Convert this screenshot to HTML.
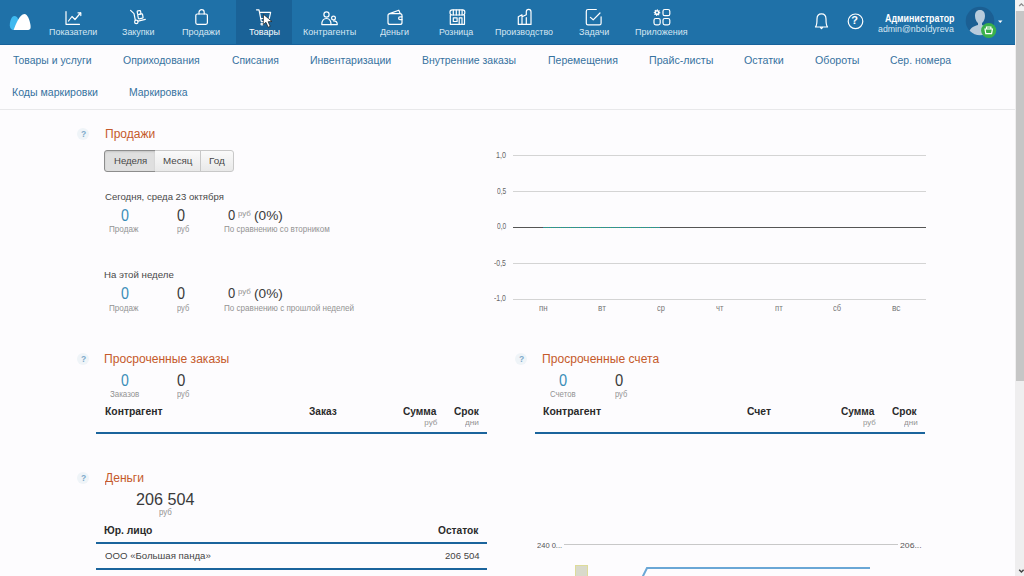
<!DOCTYPE html>
<html><head><meta charset="utf-8">
<style>
html,body{margin:0;padding:0;width:1024px;height:576px;overflow:hidden;background:#fdfcfe;font-family:"Liberation Sans",sans-serif;}
.t{position:absolute;white-space:nowrap;transform-origin:0 0;}
.a{position:absolute;}
#hdr{position:absolute;left:0;top:0;width:1015px;height:44px;background:#1f71a8;border-bottom:1px solid #17629b;}
#act{position:absolute;left:236px;top:0;width:56px;height:44px;background:#1a6297;}
#sb{position:absolute;left:1015px;top:0;width:9px;height:576px;background:#efeeef;}
#thumb{position:absolute;left:1016px;top:11px;width:8px;height:370px;background:#c6c6c6;}
#sbtop{position:absolute;left:1015px;top:0;width:9px;height:11px;background:#f3f3f3;}
.hl{position:absolute;height:2px;background:#1b649c;}
.gl{position:absolute;height:1px;background:#d4d4d4;}
.q{position:absolute;width:12px;height:12px;border-radius:50%;background:#eff4f8;}
.q:after{content:"?";position:absolute;left:0.5px;top:2px;width:12px;text-align:center;font-size:8.5px;line-height:9px;font-weight:700;color:#7eaacb;font-family:"Liberation Sans",sans-serif;}
.btn{position:absolute;top:150px;height:20px;border:1px solid #c8c8c8;background:linear-gradient(#fafafa,#e9e9e9);}
</style></head><body>
<div id="hdr"></div>
<div id="act"></div>

<!-- logo -->
<svg class="a" style="left:8px;top:12px" width="26" height="22" viewBox="0 0 26 22">
  <path d="M6.4 4 C3.6 4 1.8 9 1.8 13.2 C1.8 16.3 3.4 17.9 5.6 17.9 L8 17.9 C9.5 14 10.6 10 10.3 8 C9.8 5.5 8.4 4 6.4 4Z" fill="#3fb9ef"/>
  <path d="M5.6 17.9 C8.2 12 11.5 2.1 16.4 2.1 C19.6 2.1 21.6 8 22.5 13 C23 16.3 22.3 17.9 20.3 17.9 Z" fill="#ffffff"/>
</svg>
<!-- nav icons -->
<svg class="a" style="left:0;top:0" width="1015" height="45" fill="none" stroke="#ffffff" stroke-width="1.2" stroke-linecap="round" stroke-linejoin="round">
  <!-- Показатели -->
  <path d="M66 11.5 V24.3 H79.5"/><path d="M68.5 21 L72 16.5 L75 19.5 L80.5 13"/><path d="M78 12.8 H80.8 V15.6"/>
  <!-- Закупки -->
  <path d="M130.6 10.4 L134 13.6 L135.3 20.1"/><circle cx="136.3" cy="21.9" r="1.7"/><path d="M138.1 21.2 L145.3 19.3"/>
  <g transform="rotate(-10 140 15)"><rect x="137.8" y="10.6" width="3.4" height="3.6" rx="0.7"/><rect x="137.8" y="14.2" width="4.8" height="4.4" rx="0.7"/></g>
  <!-- Продажи -->
  <rect x="195.8" y="14" width="11.6" height="10.3" rx="1.5"/><path d="M199 14 V12.3 A2.6 2.6 0 0 1 204.2 12.3 V14"/>
  <!-- Товары (cart) -->
  <path d="M256.5 9.8 H259 L261.3 21.5 H268.5"/><path d="M259.7 12.3 H270.6 L269.3 18.5 H261"/><circle cx="262" cy="24" r="1"/>
  <!-- Контрагенты -->
  <circle cx="326.5" cy="14.5" r="2.6"/><path d="M321.8 24.6 C321.8 20.5 323.8 18.5 326.5 18.5 C329.2 18.5 331 20.5 331 24.6 Z"/>
  <circle cx="333.5" cy="18" r="1.9"/><path d="M331 24.6 H337.3 C337.3 22.2 336 20.9 333.5 20.9"/>
  <!-- Деньги -->
  <rect x="388" y="13.6" width="14" height="10.8" rx="2"/><path d="M389.5 13.6 L398.8 10.2 L400.2 13.6"/><path d="M402 16.8 H400 A1.4 1.4 0 0 0 400 19.6 H402"/>
  <!-- Розница -->
  <path d="M450.3 15 V24.3 H464.5 V15"/><rect x="450" y="9.8" width="14.8" height="5.2" rx="2.2"/><path d="M453.3 10 V15 M456.3 10 V15 M459.3 10 V15 M462.1 10 V15"/>
  <rect x="453.3" y="17.8" width="3.8" height="3.7"/><path d="M459.2 24.3 V17.8 H462 V24.3"/>
  <!-- Производство -->
  <path d="M518.3 24.4 V16.8 L522 14.8 V16.8 L526.3 14.8 V11.8 A2.3 2.3 0 0 1 531 11.8 V24.4 Z"/><path d="M522 17.5 V24.4 M526.3 17.5 V24.4"/>
  <!-- Задачи -->
  <path d="M596.3 9.5 H588 A1.7 1.7 0 0 0 586.3 11.2 V23.2 A1.7 1.7 0 0 0 588 24.9 H599.4 A1.7 1.7 0 0 0 601.1 23.2 V16.8"/><path d="M590.4 17.4 L593.2 19.8 L600 13"/>
  <!-- Приложения -->
  <rect x="663" y="9.5" width="6.8" height="6.2" rx="1.8"/><rect x="654" y="18.5" width="6.2" height="6.3" rx="1.8"/><rect x="663" y="18.5" width="6.8" height="6.3" rx="1.8"/>
  <path d="M657.00 9.20 L657.66 9.27 L657.96 10.29 L658.39 10.52 L659.40 10.20 L659.83 10.71 L659.31 11.64 L659.45 12.11 L660.40 12.60 L660.33 13.26 L659.31 13.56 L659.08 13.99 L659.40 15.00 L658.89 15.43 L657.96 14.91 L657.49 15.05 L657.00 16.00 L656.34 15.93 L656.04 14.91 L655.61 14.68 L654.60 15.00 L654.17 14.49 L654.69 13.56 L654.55 13.09 L653.60 12.60 L653.67 11.94 L654.69 11.64 L654.92 11.21 L654.60 10.20 L655.11 9.77 L656.04 10.29 L656.51 10.15 Z" fill="#ffffff" stroke="none"/><circle cx="657" cy="12.6" r="1" fill="#1f71a8" stroke="none"/>
  <!-- bell -->
  <path d="M815.5 27 C817 25.5 817 23 817 19 C817 15.5 819 13.8 821.5 13.8 C824 13.8 826 15.5 826 19 C826 23 826 25.5 827.5 27 Z"/><path d="M820.5 27.5 L821.5 28.5 L822.5 27.5"/>
  <!-- help -->
  <circle cx="855.5" cy="21.3" r="7.3"/>
</svg>
<div class="t" style="left:851.3px;top:14.8px;font-size:11px;line-height:11px;font-weight:700;color:#fff">?</div>

<!-- avatar -->
<svg class="a" style="left:964px;top:5px" width="40" height="36" viewBox="0 0 40 36">
  <defs><clipPath id="cc"><circle cx="16" cy="16" r="14.3"/></clipPath></defs>
  <circle cx="16" cy="16" r="14.3" fill="#1b5f93"/>
  <g clip-path="url(#cc)" fill="#b8cbdc">
    <path d="M16 5 C12.5 5 11 7.5 11 11 C11 14 12.5 17 14 18 L14 20 C9 21.5 5 23 4 31 L28 31 C27 23 23 21.5 18 20 L18 18 C19.5 17 21 14 21 11 C21 7.5 19.5 5 16 5Z"/>
  </g>
  <circle cx="24.7" cy="25.5" r="7.6" fill="#3ab04a"/>
  <path d="M21 24 H28.4 L27.6 28.6 H21.8 Z" fill="none" stroke="#fff" stroke-width="1.2"/>
  <path d="M22.5 24 V22 H26.9 V24" fill="none" stroke="#fff" stroke-width="1.2"/>
  <path d="M34 15.5 L38.5 15.5 L36.25 18 Z" fill="#fff"/>
</svg>

<!-- cursor -->
<svg class="a" style="left:262px;top:13px" width="14" height="16" viewBox="0 0 14 16">
  <path d="M1.50 1.40 L1.27 11.63 L3.92 9.33 L6.21 14.28 L8.17 13.36 L6.10 8.64 L10.01 8.53 Z" fill="#fff" stroke="#1a1a1a" stroke-width="0.7" stroke-linejoin="round"/>
</svg>

<div id="sb"></div><div id="sbtop"></div><div id="thumb"></div>
<svg class="a" style="left:1015px;top:0" width="9" height="576"><path d="M4.2 6 L6.4 3.8 L8.6 6" fill="none" stroke="#8a8a8a" stroke-width="1.3"/><path d="M4.2 569.8 L6.4 572 L8.6 569.8" fill="none" stroke="#444" stroke-width="1.4"/></svg>

<!-- submenu bottom border -->
<div class="a" style="left:0;top:109px;width:1015px;height:1px;background:#e8e8ea"></div>

<!-- help icons -->
<div class="q" style="left:77px;top:128px"></div>
<div class="q" style="left:77px;top:353px"></div>
<div class="q" style="left:515px;top:353px"></div>
<div class="q" style="left:77px;top:472px"></div>

<!-- period buttons -->
<div class="btn" style="left:104px;width:50px;border-radius:3px 0 0 3px;background:#dfdfdf;box-shadow:inset 0 1px 2px rgba(0,0,0,.12);border-color:#8d8d8d"></div>
<div class="btn" style="left:155px;width:45px;border-left:none;border-radius:0"></div>
<div class="btn" style="left:200px;width:32px;border-radius:0 3px 3px 0"></div>

<!-- chart 1 -->
<div class="gl" style="left:513px;top:155px;width:413px"></div>
<div class="gl" style="left:513px;top:191px;width:413px"></div>
<div class="a" style="left:513px;top:227px;width:413px;height:1px;background:#555"></div>
<div class="a" style="left:543px;top:227px;width:117px;height:1px;background:repeating-linear-gradient(90deg,#2f78b8 0 1px,#3fae5e 1px 2px)"></div>
<div class="gl" style="left:513px;top:263px;width:413px"></div>
<div class="gl" style="left:513px;top:299px;width:413px"></div>

<!-- table lines -->
<div class="hl" style="left:96px;top:432px;width:391px"></div>
<div class="hl" style="left:535px;top:432px;width:390px"></div>
<div class="hl" style="left:96px;top:541.5px;width:391px"></div>
<div class="hl" style="left:96px;top:567.5px;width:391px"></div>

<!-- chart 2 -->
<div class="gl" style="left:563.5px;top:544px;width:334px;background:#c8c8c8"></div>
<div class="a" style="left:575px;top:565px;width:11px;height:12px;background:#d9dacb;border:1px solid #dedc9a;border-bottom:none"></div>
<svg class="a" style="left:630px;top:560px" width="250" height="16"><path d="M12 18 L17 8 H240" fill="none" stroke="#6aa7d6" stroke-width="2"/></svg>

<div class=t style="left:48.86px;top:27.00px;font-size:9.5px;line-height:9.5px;font-weight:400;color:#d6e6f2;transform:scaleX(0.9440)">Показатели</div>
<div class=t style="left:122.00px;top:27.00px;font-size:9.5px;line-height:9.5px;font-weight:400;color:#d6e6f2;transform:scaleX(0.9382)">Закупки</div>
<div class=t style="left:181.64px;top:27.00px;font-size:9.5px;line-height:9.5px;font-weight:400;color:#d6e6f2;transform:scaleX(0.9579)">Продажи</div>
<div class=t style="left:249.10px;top:27.00px;font-size:9.5px;line-height:9.5px;font-weight:400;color:#ffffff;transform:scaleX(0.9469)">Товары</div>
<div class=t style="left:302.75px;top:27.00px;font-size:9.5px;line-height:9.5px;font-weight:400;color:#d6e6f2;transform:scaleX(0.9500)">Контрагенты</div>
<div class=t style="left:380.20px;top:27.00px;font-size:9.5px;line-height:9.5px;font-weight:400;color:#d6e6f2;transform:scaleX(0.9467)">Деньги</div>
<div class=t style="left:439.07px;top:27.00px;font-size:9.5px;line-height:9.5px;font-weight:400;color:#d6e6f2;transform:scaleX(0.9333)">Розница</div>
<div class=t style="left:494.56px;top:27.00px;font-size:9.5px;line-height:9.5px;font-weight:400;color:#d6e6f2;transform:scaleX(0.9361)">Производство</div>
<div class=t style="left:578.80px;top:27.00px;font-size:9.5px;line-height:9.5px;font-weight:400;color:#d6e6f2;transform:scaleX(0.9484)">Задачи</div>
<div class=t style="left:635.25px;top:27.00px;font-size:9.5px;line-height:9.5px;font-weight:400;color:#d6e6f2;transform:scaleX(0.9463)">Приложения</div>
<div class=t style="left:884.50px;top:14.00px;font-size:10px;line-height:10px;font-weight:700;color:#ffffff;transform:scaleX(0.8859)">Администратор</div>
<div class=t style="left:877.90px;top:24.00px;font-size:9.5px;line-height:9.5px;font-weight:400;color:#d6e6f2;transform:scaleX(0.9244)">admin@nboldyreva</div>
<div class=t style="left:13.20px;top:55.00px;font-size:11.5px;line-height:11.5px;font-weight:400;color:#36729f;transform:scaleX(0.9047)">Товары и услуги</div>
<div class=t style="left:123.00px;top:55.00px;font-size:11.5px;line-height:11.5px;font-weight:400;color:#36729f;transform:scaleX(0.9107)">Оприходования</div>
<div class=t style="left:231.60px;top:55.00px;font-size:11.5px;line-height:11.5px;font-weight:400;color:#36729f;transform:scaleX(0.8981)">Списания</div>
<div class=t style="left:310.29px;top:55.00px;font-size:11.5px;line-height:11.5px;font-weight:400;color:#36729f;transform:scaleX(0.9149)">Инвентаризации</div>
<div class=t style="left:422.09px;top:55.00px;font-size:11.5px;line-height:11.5px;font-weight:400;color:#36729f;transform:scaleX(0.9098)">Внутренние заказы</div>
<div class=t style="left:547.99px;top:55.00px;font-size:11.5px;line-height:11.5px;font-weight:400;color:#36729f;transform:scaleX(0.9133)">Перемещения</div>
<div class=t style="left:648.77px;top:55.00px;font-size:11.5px;line-height:11.5px;font-weight:400;color:#36729f;transform:scaleX(0.9265)">Прайс-листы</div>
<div class=t style="left:744.20px;top:55.00px;font-size:11.5px;line-height:11.5px;font-weight:400;color:#36729f;transform:scaleX(0.9310)">Остатки</div>
<div class=t style="left:814.80px;top:55.00px;font-size:11.5px;line-height:11.5px;font-weight:400;color:#36729f;transform:scaleX(0.9277)">Обороты</div>
<div class=t style="left:890.40px;top:55.00px;font-size:11.5px;line-height:11.5px;font-weight:400;color:#36729f;transform:scaleX(0.9075)">Сер. номера</div>
<div class=t style="left:11.78px;top:87.00px;font-size:11.5px;line-height:11.5px;font-weight:400;color:#36729f;transform:scaleX(0.9196)">Коды маркировки</div>
<div class=t style="left:128.59px;top:87.00px;font-size:11.5px;line-height:11.5px;font-weight:400;color:#36729f;transform:scaleX(0.9062)">Маркировка</div>
<div class=t style="left:104.74px;top:128.00px;font-size:12.5px;line-height:12.5px;font-weight:400;color:#c55a2b;transform:scaleX(0.9608)">Продажи</div>
<div class=t style="left:114.34px;top:157.00px;font-size:9px;line-height:9px;font-weight:400;color:#484848;transform:scaleX(1.0600)">Неделя</div>
<div class=t style="left:162.72px;top:157.00px;font-size:9px;line-height:9px;font-weight:400;color:#484848;transform:scaleX(1.0846)">Месяц</div>
<div class=t style="left:208.80px;top:157.00px;font-size:9px;line-height:9px;font-weight:400;color:#484848;transform:scaleX(1.1000)">Год</div>
<div class=t style="left:104.90px;top:193.00px;font-size:9px;line-height:9px;font-weight:400;color:#484848;transform:scaleX(1.0607)">Сегодня, среда 23 октября</div>
<div class=t style="left:103.72px;top:271.00px;font-size:9px;line-height:9px;font-weight:400;color:#484848;transform:scaleX(1.0750)">На этой неделе</div>
<div class=t style="left:120.50px;top:208.00px;font-size:16px;line-height:16px;font-weight:400;color:#3a8db8;transform:scaleX(0.8889)">0</div>
<div class=t style="left:109.24px;top:225.00px;font-size:8.5px;line-height:8.5px;font-weight:400;color:#939393;transform:scaleX(0.9567)">Продаж</div>
<div class=t style="left:176.80px;top:208.00px;font-size:16px;line-height:16px;font-weight:400;color:#3a3a3a;transform:scaleX(0.9000)">0</div>
<div class=t style="left:177.00px;top:225.00px;font-size:8.5px;line-height:8.5px;font-weight:400;color:#939393;transform:scaleX(0.8786)">руб</div>
<div class=t style="left:227.80px;top:208.00px;font-size:14px;line-height:14px;font-weight:400;color:#3a3a3a;transform:scaleX(0.9286)">0</div>
<div class=t style="left:238.10px;top:210.00px;font-size:8px;line-height:8px;font-weight:400;color:#939393;transform:scaleX(0.9846)">руб</div>
<div class=t style="left:253.99px;top:209.00px;font-size:13.5px;line-height:13.5px;font-weight:400;color:#3a3a3a;transform:scaleX(1.0111)">(0%)</div>
<div class=t style="left:223.75px;top:225.00px;font-size:8.5px;line-height:8.5px;font-weight:400;color:#939393;transform:scaleX(0.9450)">По сравнению со вторником</div>
<div class=t style="left:120.50px;top:286.00px;font-size:16px;line-height:16px;font-weight:400;color:#3a8db8;transform:scaleX(0.8889)">0</div>
<div class=t style="left:109.24px;top:304.00px;font-size:8.5px;line-height:8.5px;font-weight:400;color:#939393;transform:scaleX(0.9567)">Продаж</div>
<div class=t style="left:176.80px;top:286.00px;font-size:16px;line-height:16px;font-weight:400;color:#3a3a3a;transform:scaleX(0.9000)">0</div>
<div class=t style="left:177.00px;top:304.00px;font-size:8.5px;line-height:8.5px;font-weight:400;color:#939393;transform:scaleX(0.8786)">руб</div>
<div class=t style="left:227.80px;top:286.00px;font-size:14px;line-height:14px;font-weight:400;color:#3a3a3a;transform:scaleX(0.9286)">0</div>
<div class=t style="left:238.10px;top:288.00px;font-size:8px;line-height:8px;font-weight:400;color:#939393;transform:scaleX(0.9846)">руб</div>
<div class=t style="left:253.99px;top:287.00px;font-size:13.5px;line-height:13.5px;font-weight:400;color:#3a3a3a;transform:scaleX(1.0111)">(0%)</div>
<div class=t style="left:223.75px;top:304.00px;font-size:8.5px;line-height:8.5px;font-weight:400;color:#939393;transform:scaleX(0.9519)">По сравнению с прошлой неделей</div>
<div class=t style="left:496.35px;top:151.00px;font-size:8.5px;line-height:8.5px;font-weight:400;color:#666666;transform:scaleX(0.8455)">1,0</div>
<div class=t style="left:497.20px;top:187.00px;font-size:8.5px;line-height:8.5px;font-weight:400;color:#666666;transform:scaleX(0.7750)">0,5</div>
<div class=t style="left:497.20px;top:222.00px;font-size:8.5px;line-height:8.5px;font-weight:400;color:#666666;transform:scaleX(0.7750)">0,0</div>
<div class=t style="left:494.30px;top:259.00px;font-size:8.5px;line-height:8.5px;font-weight:400;color:#666666;transform:scaleX(0.8133)">-0,5</div>
<div class=t style="left:494.30px;top:294.00px;font-size:8.5px;line-height:8.5px;font-weight:400;color:#666666;transform:scaleX(0.8133)">-1,0</div>
<div class=t style="left:538.60px;top:304.00px;font-size:8.5px;line-height:8.5px;font-weight:400;color:#777777;transform:scaleX(0.9333)">пн</div>
<div class=t style="left:598.00px;top:304.00px;font-size:8.5px;line-height:8.5px;font-weight:400;color:#777777;transform:scaleX(0.9625)">вт</div>
<div class=t style="left:656.80px;top:304.00px;font-size:8.5px;line-height:8.5px;font-weight:400;color:#777777;transform:scaleX(0.8778)">ср</div>
<div class=t style="left:716.10px;top:304.00px;font-size:8.5px;line-height:8.5px;font-weight:400;color:#777777;transform:scaleX(0.8875)">чт</div>
<div class=t style="left:774.80px;top:304.00px;font-size:8.5px;line-height:8.5px;font-weight:400;color:#777777;transform:scaleX(0.9000)">пт</div>
<div class=t style="left:833.20px;top:304.00px;font-size:8.5px;line-height:8.5px;font-weight:400;color:#777777;transform:scaleX(0.8778)">сб</div>
<div class=t style="left:892.30px;top:304.00px;font-size:8.5px;line-height:8.5px;font-weight:400;color:#777777;transform:scaleX(0.9875)">вс</div>
<div class=t style="left:104.23px;top:353.00px;font-size:12.5px;line-height:12.5px;font-weight:400;color:#c55a2b;transform:scaleX(0.9680)">Просроченные заказы</div>
<div class=t style="left:120.60px;top:373.00px;font-size:16px;line-height:16px;font-weight:400;color:#3a8db8;transform:scaleX(0.8778)">0</div>
<div class=t style="left:110.00px;top:390.00px;font-size:8.5px;line-height:8.5px;font-weight:400;color:#939393;transform:scaleX(0.9323)">Заказов</div>
<div class=t style="left:176.70px;top:373.00px;font-size:16px;line-height:16px;font-weight:400;color:#3a3a3a;transform:scaleX(0.9333)">0</div>
<div class=t style="left:176.90px;top:390.00px;font-size:8.5px;line-height:8.5px;font-weight:400;color:#939393;transform:scaleX(0.8857)">руб</div>
<div class=t style="left:104.61px;top:406.00px;font-size:10.5px;line-height:10.5px;font-weight:700;color:#2a2a2a;transform:scaleX(0.9877)">Контрагент</div>
<div class=t style="left:308.90px;top:406.00px;font-size:10.5px;line-height:10.5px;font-weight:700;color:#2a2a2a;transform:scaleX(0.9621)">Заказ</div>
<div class=t style="left:402.80px;top:406.00px;font-size:10.5px;line-height:10.5px;font-weight:700;color:#2a2a2a;transform:scaleX(0.9657)">Сумма</div>
<div class=t style="left:453.50px;top:406.00px;font-size:10.5px;line-height:10.5px;font-weight:700;color:#2a2a2a;transform:scaleX(0.9692)">Срок</div>
<div class=t style="left:424.30px;top:419.00px;font-size:8px;line-height:8px;font-weight:400;color:#939393;transform:scaleX(1.0000)">руб</div>
<div class=t style="left:465.30px;top:419.00px;font-size:8px;line-height:8px;font-weight:400;color:#939393;transform:scaleX(1.0308)">дни</div>
<div class=t style="left:542.43px;top:353.00px;font-size:12.5px;line-height:12.5px;font-weight:400;color:#c55a2b;transform:scaleX(0.9667)">Просроченные счета</div>
<div class=t style="left:558.90px;top:373.00px;font-size:16px;line-height:16px;font-weight:400;color:#3a8db8;transform:scaleX(0.9111)">0</div>
<div class=t style="left:550.20px;top:390.00px;font-size:8.5px;line-height:8.5px;font-weight:400;color:#939393;transform:scaleX(0.9179)">Счетов</div>
<div class=t style="left:615.10px;top:373.00px;font-size:16px;line-height:16px;font-weight:400;color:#3a3a3a;transform:scaleX(0.9222)">0</div>
<div class=t style="left:615.30px;top:390.00px;font-size:8.5px;line-height:8.5px;font-weight:400;color:#939393;transform:scaleX(0.8786)">руб</div>
<div class=t style="left:542.80px;top:406.00px;font-size:10.5px;line-height:10.5px;font-weight:700;color:#2a2a2a;transform:scaleX(0.9965)">Контрагент</div>
<div class=t style="left:747.40px;top:406.00px;font-size:10.5px;line-height:10.5px;font-weight:700;color:#2a2a2a;transform:scaleX(0.9833)">Счет</div>
<div class=t style="left:841.40px;top:406.00px;font-size:10.5px;line-height:10.5px;font-weight:700;color:#2a2a2a;transform:scaleX(0.9657)">Сумма</div>
<div class=t style="left:892.00px;top:406.00px;font-size:10.5px;line-height:10.5px;font-weight:700;color:#2a2a2a;transform:scaleX(0.9615)">Срок</div>
<div class=t style="left:862.90px;top:419.00px;font-size:8px;line-height:8px;font-weight:400;color:#939393;transform:scaleX(0.9769)">руб</div>
<div class=t style="left:903.90px;top:419.00px;font-size:8px;line-height:8px;font-weight:400;color:#939393;transform:scaleX(1.0077)">дни</div>
<div class=t style="left:104.60px;top:472.00px;font-size:12.5px;line-height:12.5px;font-weight:400;color:#c55a2b;transform:scaleX(0.9650)">Деньги</div>
<div class=t style="left:135.92px;top:491.00px;font-size:16.5px;line-height:16.5px;font-weight:400;color:#3a3a3a;transform:scaleX(0.9793)">206 504</div>
<div class=t style="left:159.00px;top:508.00px;font-size:8.5px;line-height:8.5px;font-weight:400;color:#939393;transform:scaleX(0.9286)">руб</div>
<div class=t style="left:104.31px;top:525.00px;font-size:10.5px;line-height:10.5px;font-weight:700;color:#2a2a2a;transform:scaleX(0.9875)">Юр. лицо</div>
<div class=t style="left:438.40px;top:525.00px;font-size:10.5px;line-height:10.5px;font-weight:700;color:#2a2a2a;transform:scaleX(0.9667)">Остаток</div>
<div class=t style="left:104.60px;top:552.00px;font-size:9px;line-height:9px;font-weight:400;color:#444444;transform:scaleX(1.0704)">ООО «Большая панда»</div>
<div class=t style="left:444.90px;top:552.00px;font-size:9px;line-height:9px;font-weight:400;color:#444444;transform:scaleX(1.0656)">206 504</div>
<div class=t style="left:536.80px;top:542.00px;font-size:8px;line-height:8px;font-weight:400;color:#555555;transform:scaleX(0.9423)">240 0...</div>
<div class=t style="left:900.00px;top:542.00px;font-size:8px;line-height:8px;font-weight:400;color:#555555;transform:scaleX(1.0824)">206...</div>
</body></html>
